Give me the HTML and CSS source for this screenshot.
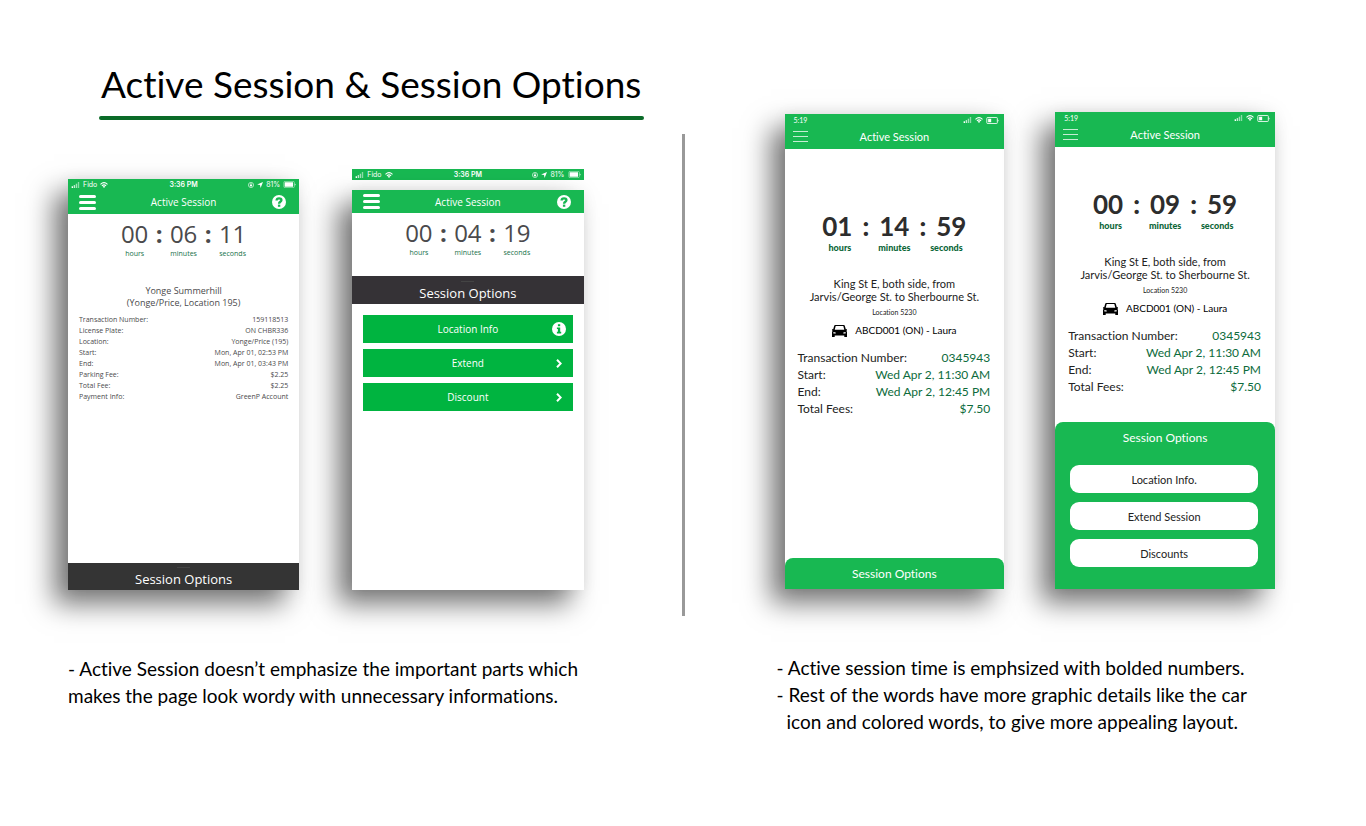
FILE: index.html
```
<!DOCTYPE html>
<html lang="en">
<head>
<meta charset="utf-8">
<title>Active Session &amp; Session Options</title>
<link rel="stylesheet" href="styles.css">
</head>
<body>
<svg class="sprite" aria-hidden="true">
  <symbol id="signal" viewBox="0 0 9 7"><path d="M0 5h1.6v2H0z"/><path opacity=".75" d="M2.400 3.600H4V7H2.400z"/><path opacity=".6" d="M4.800 2h1.600v5H4.800z"/><path opacity=".5" d="M7.200 0h1.600v7H7.200z"/></symbol>
  <symbol id="wifi" viewBox="0 0 16 12"><path fill="none" stroke="currentColor" stroke-width="2.2" d="M1 4.600Q8-1.800 15 4.600M3.800 7.600Q8 3.800 12.200 7.600"/><path d="M8 12 5.400 9.200Q8 7.200 10.600 9.200z"/></symbol>
  <symbol id="battery" viewBox="0 0 14 8"><path fill="none" stroke="currentColor" stroke-width=".8" d="M1.500.500h10q1 0 1 1v5q0 1-1 1h-10q-1 0-1-1v-5q0-1 1-1z" opacity=".6"/><path d="M1.500 1.500h9.500v5H1.500zM13 2.800q.9.300.9 1.200t-.9 1.200z"/></symbol>
  <symbol id="battery-low" viewBox="0 0 14 8"><path fill="none" stroke="currentColor" d="M1.500.500h10q1 0 1 1v5q0 1-1 1h-10q-1 0-1-1v-5q0-1 1-1z"/><path d="M2 2h3.500v4H2zM13 2.800q.9.300.9 1.200t-.9 1.200z"/></symbol>
  <symbol id="lock" viewBox="0 0 12 12"><circle cx="6" cy="6" r="5.200" fill="none" stroke="currentColor" stroke-width="1.200"/><path d="M3.800 5.500h4.400v3.200H3.800z"/><path fill="none" stroke="currentColor" d="M4.700 6V4.200a1.300 1.300 0 0 1 2.600 0V6"/></symbol>
  <symbol id="arrow" viewBox="0 0 12 12"><path d="M12 0 7.200 12 6 6.200.200 5z"/></symbol>
  <symbol id="help" viewBox="0 0 14 14"><circle cx="7" cy="7" r="7"/><path fill="none" stroke="#18b852" stroke-width="2.400" d="M4.600 5.500C4.700 2.600 9.500 2.700 9.400 5.300 9.300 6.900 7.100 6.700 7.100 8.700"/><path fill="#18b852" d="M5.900 9.600h2.400v2.200H5.900z"/></symbol>
  <symbol id="info" viewBox="0 0 14 14"><circle cx="7" cy="7" r="7"/><path fill="#00b440" d="M5.900 2.300h2.300v2H5.900zM4.900 5.400h3.300v4.400h1v1.600H4.900V9.800h1V7h-1z"/></symbol>
  <symbol id="chevron" viewBox="0 0 6 9"><path fill="none" stroke="currentColor" stroke-width="2" d="M1 .8 4.700 4.500 1 8.200"/></symbol>
  <symbol id="car" viewBox="0 0 15 12"><path d="M3.200 0h8.600q.8 0 1 .8l1 3.400H15v1.200l-.8.300q.8.600.8 1.500V12h-2.700v-1.600H2.700V12H0V7.200q0-.9.800-1.500L0 5.400V4.200h1.200l1-3.400q.2-.8 1-.8z"/><path fill="#fff" d="M3.700 1h7.600l1 3.800H2.700zM1.400 6.900l2.300.6v1.100H1.400zM13.600 6.900l-2.300.6v1.100h2.300z"/></symbol>
</svg>

<main class="board">
  <section class="side side-before">
    <h1 class="title">Active Session &amp; Session Options</h1>
    <div class="phones">

      <article class="phone old">
        <div class="status"><span class="status-group"><svg class="i-signal"><use href="#signal"/></svg>Fido <svg class="i-wifi"><use href="#wifi"/></svg></span><b class="clock">3:36 PM</b><span class="status-group"><svg class="i-mini"><use href="#lock"/></svg><svg class="i-mini"><use href="#arrow"/></svg>81%<svg class="i-battery"><use href="#battery"/></svg></span></div>
        <header class="bar"><button class="menu" aria-label="Menu"><i></i><i></i><i></i></button><h2 class="bar-title">Active Session</h2><button class="icon-button" aria-label="Help"><svg class="i-round"><use href="#help"/></svg></button></header>
        <div class="screen">
          <div class="timer"><span class="unit">00<small>hours</small></span><b class="colon">:</b><span class="unit">06<small>minutes</small></span><b class="colon">:</b><span class="unit">11<small>seconds</small></span></div>
          <p class="place">Yonge Summerhill<br>(Yonge/Price, Location 195)</p>
          <table class="details">
            <tr><th scope="row">Transaction Number:</th><td>159118513</td></tr>
            <tr><th scope="row">License Plate:</th><td>ON CHBR336</td></tr>
            <tr><th scope="row">Location:</th><td>Yonge/Price (195)</td></tr>
            <tr><th scope="row">Start:</th><td>Mon, Apr 01, 02:53 PM</td></tr>
            <tr><th scope="row">End:</th><td>Mon, Apr 01, 03:43 PM</td></tr>
            <tr><th scope="row">Parking Fee:</th><td>$2.25</td></tr>
            <tr><th scope="row">Total Fee:</th><td>$2.25</td></tr>
            <tr><th scope="row">Payment Info:</th><td>GreenP Account</td></tr>
          </table>
        </div>
        <button class="drawer">Session Options</button>
      </article>

      <article class="phone old open">
        <div class="status"><span class="status-group"><svg class="i-signal"><use href="#signal"/></svg>Fido <svg class="i-wifi"><use href="#wifi"/></svg></span><b class="clock">3:36 PM</b><span class="status-group"><svg class="i-mini"><use href="#lock"/></svg><svg class="i-mini"><use href="#arrow"/></svg>81%<svg class="i-battery"><use href="#battery"/></svg></span></div>
        <div class="panel">
          <header class="bar"><button class="menu" aria-label="Menu"><i></i><i></i><i></i></button><h2 class="bar-title">Active Session</h2><button class="icon-button" aria-label="Help"><svg class="i-round"><use href="#help"/></svg></button></header>
          <div class="timer"><span class="unit">00<small>hours</small></span><b class="colon">:</b><span class="unit">04<small>minutes</small></span><b class="colon">:</b><span class="unit">19<small>seconds</small></span></div>
          <button class="drawer">Session Options</button>
          <div class="options">
            <button class="option">Location Info<svg class="i-round"><use href="#info"/></svg></button>
            <button class="option">Extend<svg class="i-chevron"><use href="#chevron"/></svg></button>
            <button class="option">Discount<svg class="i-chevron"><use href="#chevron"/></svg></button>
          </div>
        </div>
      </article>
    </div>
    <p class="caption">- Active Session doesn’t emphasize the important parts which<br>makes the page look wordy with unnecessary informations.</p>
  </section>

  <div class="divider"></div>

  <section class="side side-after">
    <div class="phones">

      <article class="phone new">
        <div class="status"><span class="clock">5:19</span><span class="status-group"><svg class="i-signal"><use href="#signal"/></svg><svg class="i-wifi"><use href="#wifi"/></svg><svg class="i-battery"><use href="#battery-low"/></svg></span></div>
        <header class="bar"><button class="menu" aria-label="Menu"><i></i><i></i><i></i></button><h2 class="bar-title">Active Session</h2></header>
        <div class="screen">
          <div class="timer"><span class="unit">01<small>hours</small></span><b class="colon">:</b><span class="unit">14<small>minutes</small></span><b class="colon">:</b><span class="unit">59<small>seconds</small></span></div>
          <p class="place">King St E, both side, from<br>Jarvis/George St. to Sherbourne St.</p>
          <p class="location">Location 5230</p>
          <p class="vehicle"><svg class="i-car"><use href="#car"/></svg>ABCD001 (ON) - Laura</p>
          <table class="details">
            <tr><th scope="row">Transaction Number:</th><td>0345943</td></tr>
            <tr><th scope="row">Start:</th><td>Wed Apr 2, 11:30 AM</td></tr>
            <tr><th scope="row">End:</th><td>Wed Apr 2, 12:45 PM</td></tr>
            <tr><th scope="row">Total Fees:</th><td>$7.50</td></tr>
          </table>
        </div>
        <div class="sheet"><button class="sheet-title">Session Options</button></div>
      </article>

      <article class="phone new open">
        <div class="status"><span class="clock">5:19</span><span class="status-group"><svg class="i-signal"><use href="#signal"/></svg><svg class="i-wifi"><use href="#wifi"/></svg><svg class="i-battery"><use href="#battery-low"/></svg></span></div>
        <header class="bar"><button class="menu" aria-label="Menu"><i></i><i></i><i></i></button><h2 class="bar-title">Active Session</h2></header>
        <div class="screen">
          <div class="timer"><span class="unit">00<small>hours</small></span><b class="colon">:</b><span class="unit">09<small>minutes</small></span><b class="colon">:</b><span class="unit">59<small>seconds</small></span></div>
          <p class="place">King St E, both side, from<br>Jarvis/George St. to Sherbourne St.</p>
          <p class="location">Location 5230</p>
          <p class="vehicle"><svg class="i-car"><use href="#car"/></svg>ABCD001 (ON) - Laura</p>
          <table class="details">
            <tr><th scope="row">Transaction Number:</th><td>0345943</td></tr>
            <tr><th scope="row">Start:</th><td>Wed Apr 2, 11:30 AM</td></tr>
            <tr><th scope="row">End:</th><td>Wed Apr 2, 12:45 PM</td></tr>
            <tr><th scope="row">Total Fees:</th><td>$7.50</td></tr>
          </table>
        </div>
        <div class="sheet"><button class="sheet-title">Session Options</button>
          <div class="choices">
            <button class="choice">Location Info.</button>
            <button class="choice">Extend Session</button>
            <button class="choice">Discounts</button>
          </div>
        </div>
      </article>
    </div>
    <p class="caption">- Active session time is emphsized with bolded numbers.<br>- Rest of the words have more graphic details like the car<br><span class="indent">icon and colored words, to give more appealing layout.</span></p>
  </section>
</main>
</body>
</html>
```
FILE: styles.css
```
* { box-sizing: border-box; }
body { margin: 0; background: #fff; color: #000; font-family: Lato, sans-serif; font-variant-ligatures: none; }
h1, h2, p { margin: 0; font-weight: 400; }
button { margin: 0; padding: 0; border: 0; background: none; color: inherit; font: inherit; font-variant-ligatures: none; cursor: pointer; }
svg { display: block; fill: currentColor; flex: none; }
.sprite { position: absolute; width: 0; height: 0; }

.board { display: grid; grid-template-columns: minmax(0, 1fr) 3px minmax(0, 1fr); padding: 61px 0 48px; }
.side { display: flex; flex-direction: column; }
.side-before { padding: 0 98px 0 68px; }
.side-after { padding: 51px 91px 0 100px; }
.divider { height: 482px; margin-top: 73px; background: #999; }

.title { align-self: flex-start; margin-left: 31px; padding: 0 0 8px 2px; font-size: 37px; line-height: 46px; white-space: nowrap; }
.title::after { content: ""; display: block; height: 4px; margin: 9px -3px 0 -2px; border-radius: 2px; background: #0b6b28; }
.side-before .phones { margin-top: 41px; gap: 53px; }
.side-after .phones { gap: 51px; }
.phones { display: flex; align-items: flex-end; }
.phone { flex: 1 1 0; min-width: 0; display: flex; flex-direction: column; }
.phone:not(.old.open), .panel { background: #fff; box-shadow: -14px 14px 26px rgba(0, 0, 0, .54), 0 0 16px rgba(0, 0, 0, .05); }
.caption { margin-top: 65px; font-size: 19px; line-height: 27px; white-space: nowrap; }
.side-after .caption { margin-left: -8px; }
.indent { padding-left: 10px; }

.status, .bar { color: #fff; background: #18b852; }
.status { display: grid; align-items: center; }
.status-group { display: flex; align-items: center; gap: 3px; }
.status-group:last-child { justify-content: flex-end; }
.bar { display: grid; align-items: center; }
.bar-title { text-align: center; }
.menu { display: grid; }
.menu i { background: #fff; }
.screen { flex: 1; }
.timer { display: flex; justify-content: center; }
.unit { display: flex; flex-direction: column; align-items: center; }
.colon { text-align: center; }
.place, .location { text-align: center; }
.details, .details tbody { display: block; }
.details tr { display: flex; justify-content: space-between; }
.details th, .details td { padding: 0; font-weight: 400; white-space: nowrap; }

.i-signal { width: 9px; height: 6px; }
.i-wifi { width: 8px; height: 6px; }
.i-mini { width: 6px; height: 6px; }
.i-battery { width: 13px; height: 7px; }
.i-round { width: 14px; height: 14px; }
.i-chevron { width: 6px; height: 9px; }
.i-car { width: 15px; height: 12px; }

.old { min-height: 411px; font-family: "Open Sans", sans-serif; color: #4a4a4c; }
.old .status { grid-template-columns: 1fr auto 1fr; height: 11px; padding: 0 3px; font: 7px/11px Inter, sans-serif; }
.old .clock { font-weight: 600; }
.old .bar { grid-template-columns: 18px 1fr 18px; height: 24px; padding: 0 11px; }
.old .bar-title { font-size: 10px; line-height: 16px; }
.old .menu { gap: 3px; width: 17px; }
.old .menu i { height: 3px; border-radius: 2px; }
.icon-button { justify-self: center; }
.old .timer { padding-top: 4px; font-size: 24px; line-height: 32px; }
.old .unit { width: 33px; }
.old .unit small { font-size: 7px; line-height: 8px; color: #17714a; }
.old .colon { width: 16px; }
.old .place { margin-top: 27px; font-size: 9px; line-height: 12px; }
.old .details { margin: 5px 11px 0; font-size: 7px; line-height: 11px; }
.drawer { display: block; width: 100%; height: 27px; background: #343434; color: #fff; font-size: 13px; line-height: 18px; }
.drawer::before { content: ""; display: block; width: 13px; height: 1px; margin: 2px auto; background: #444; }
.old.open { min-height: 421px; }
.old.open .status { margin-bottom: 10px; }
.panel { flex: 1; }
.old.open .bar { height: 23px; }
.old.open .timer { padding-bottom: 19px; }
.old.open .drawer { height: 28px; background: #353236; }
.options { display: grid; gap: 6px; padding: 11px 11px 0; }
.option { display: grid; grid-template-columns: 14px 1fr 14px; align-items: center; justify-items: center; height: 28px; padding: 0 7px; background: #00b440; color: #fff; font-size: 10px; }
.option::before { content: ""; }

.new { min-height: 475px; color: #222; }
.new .status { grid-template-columns: 1fr 1fr; height: 12px; padding: 0 5px 0 9px; font-size: 7px; line-height: 12px; }
.new .bar { grid-template-columns: 15px 1fr 15px; height: 23px; padding: 0 8px 3px; }
.new .bar-title { font-size: 11px; line-height: 15px; }
.new .menu { gap: 4px; }
.new .menu i { height: 1px; opacity: .75; }
.new .timer { padding-top: 60px; font-size: 26px; line-height: 34px; font-weight: 700; color: #2d2d2d; }
.new .unit { width: 40px; }
.new .unit small { font-size: 9px; line-height: 10px; font-weight: 900; color: #0b6638; }
.new .unit:first-child small { padding-left: 5px; }
.new .unit:last-child small { padding-right: 10px; }
.new .colon { width: 17px; }
.new .place { margin-top: 24px; font-size: 11px; line-height: 13px; }
.new .location { margin-top: 5px; font-size: 7px; line-height: 9px; }
.vehicle { display: flex; align-items: center; justify-content: center; gap: 8px; margin-top: 7px; font-size: 10px; line-height: 13px; color: #000; }
.new .details { margin: 12px 14px 0 13px; font-size: 12px; line-height: 17px; }
.new .details td { color: #0d6b3c; }
.sheet { min-height: 31px; border-radius: 8px 8px 0 0; background: #18b852; color: #fff; font-size: 11px; }
.sheet-title { display: block; width: 100%; font-size: 12px; line-height: 31px; }
.choices { display: grid; gap: 9px; padding: 12px 17px 22px 15px; }
.choice { height: 28px; border-radius: 9px; background: #fff; color: #222; }
.new.open { min-height: 477px; }
.new.open .timer { padding-top: 40px; }
```
